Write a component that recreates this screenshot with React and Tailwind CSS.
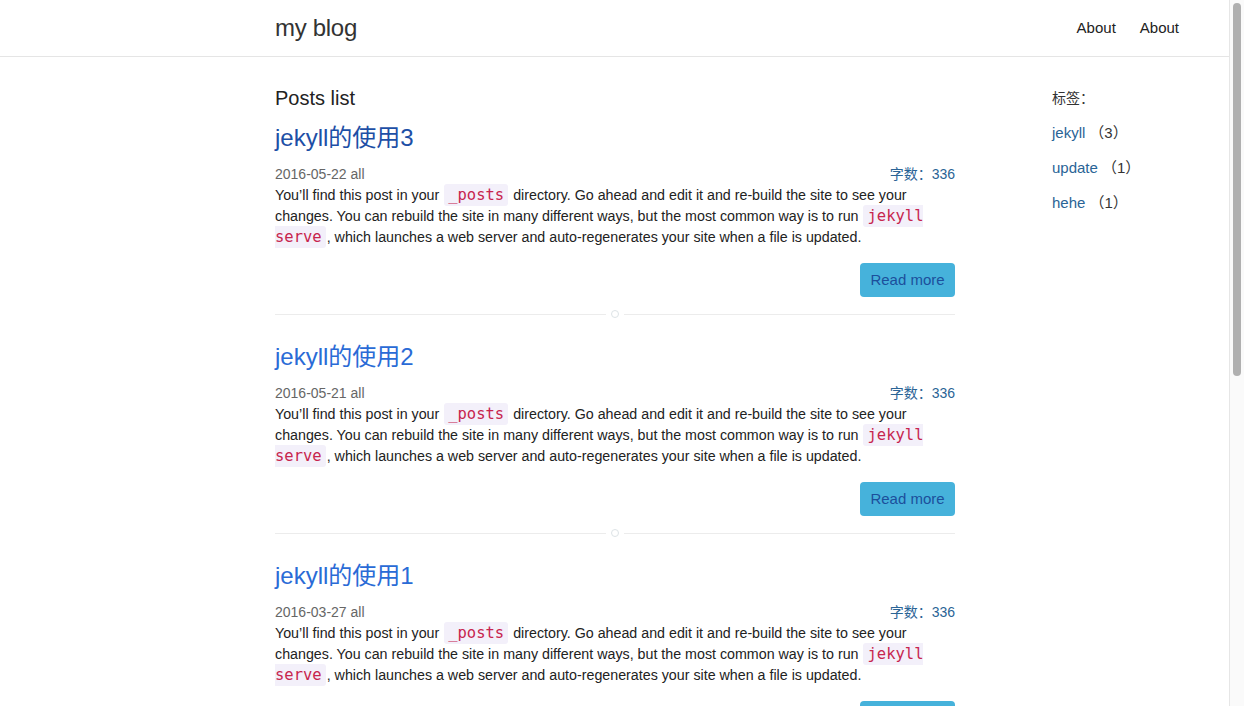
const posts = [
  { title: 'jekyll的使用3', date: '2016-05-22', titleClass: 'text-[#1d4fa6]' },
  { title: 'jekyll的使用2', date: '2016-05-21', titleClass: 'text-[#2a6bd6]' },
  { title: 'jekyll的使用1', date: '2016-03-27', titleClass: 'text-[#2a6bd6]' },
]

const tags = [
  { name: 'jekyll', count: 3 },
  { name: 'update', count: 1 },
  { name: 'hehe', count: 1 },
]

const Code = ({ children }) => (
  <code className="font-['DejaVu_Sans_Mono',monospace] text-[15.5px] leading-none text-[#c7254e] bg-[#f3f0fa] rounded-[3px] px-[4px] py-[2px] mx-[1px]">
    {children}
  </code>
)

function Post({ post }) {
  return (
    <div>
      <h2 className={`text-[24px] leading-[36px] ${post.titleClass}`}>{post.title}</h2>
      <div className="mt-2 flex justify-between text-[14px] leading-[21px]">
        <span className="text-[#666]">{post.date} all</span>
        <span className="text-[#2a6496]">字数：336</span>
      </div>
      <p className="text-[14.25px] leading-[21px] text-[#222]">
        You’ll find this post in your <Code>_posts</Code> directory. Go ahead and edit it and re-build the site to see
        your changes. You can rebuild the site in many different ways, but the most common way is to run{' '}
        <Code>jekyll serve</Code>, which launches a web server and auto-regenerates your site when a file is updated.
      </p>
      <div className="mt-[15px] flex justify-end">
        <button className="h-[34px] w-[95px] rounded-[4px] bg-[#46b2db] text-[15px] text-[#1c4f9c]">Read more</button>
      </div>
      <div className="mt-[13px] mb-[21px] flex items-center h-2">
        <div className="flex-1 h-px bg-[#ececec]" />
        <div className="mx-[5px] h-[8px] w-[8px] rounded-full border border-[#dde3e6]" />
        <div className="flex-1 h-px bg-[#ececec]" />
      </div>
    </div>
  )
}

export default function App() {
  return (
    <div className="flex h-[706px] w-full overflow-hidden bg-white font-['Liberation_Sans','Noto_Sans_CJK_SC',sans-serif] text-[#333]">
      <div className="flex-1 overflow-hidden">
        <header className="h-[57px] border-b border-[#e5e5e5] flex items-center justify-between pl-[275px] pr-[50px]">
          <a className="text-[24px] font-light tracking-[-0.3px] text-[#333]">my blog</a>
          <nav className="flex gap-6 text-[15px] text-[#222]">
            <a>About</a>
            <a>About</a>
          </nav>
        </header>
        <main className="flex pl-[275px] pt-[27px]">
          <div className="w-[680px]">
            <h1 className="text-[20px] leading-[28px] mb-2 text-[#222]">Posts list</h1>
            {posts.map((p) => (
              <Post key={p.title} post={p} />
            ))}
          </div>
          <aside className="ml-[97px] pt-[2px] text-[14px]">
            <div className="leading-[24px] text-[#333]">标签：</div>
            {tags.map((t) => (
              <div key={t.name} className="mt-[11px] leading-[24px] text-[15px]">
                <a className="text-[#2a6496]">{t.name}</a>
                <span className="ml-1 text-[#333]">（{t.count}）</span>
              </div>
            ))}
          </aside>
        </main>
      </div>
      <div className="w-[15px] shrink-0 border-l border-[#e6e6e6] bg-[#fafafa] pt-[3px] flex justify-center">
        <div className="h-[373px] w-[8px] rounded-full bg-[#b0b0b0]" />
      </div>
    </div>
  )
}
